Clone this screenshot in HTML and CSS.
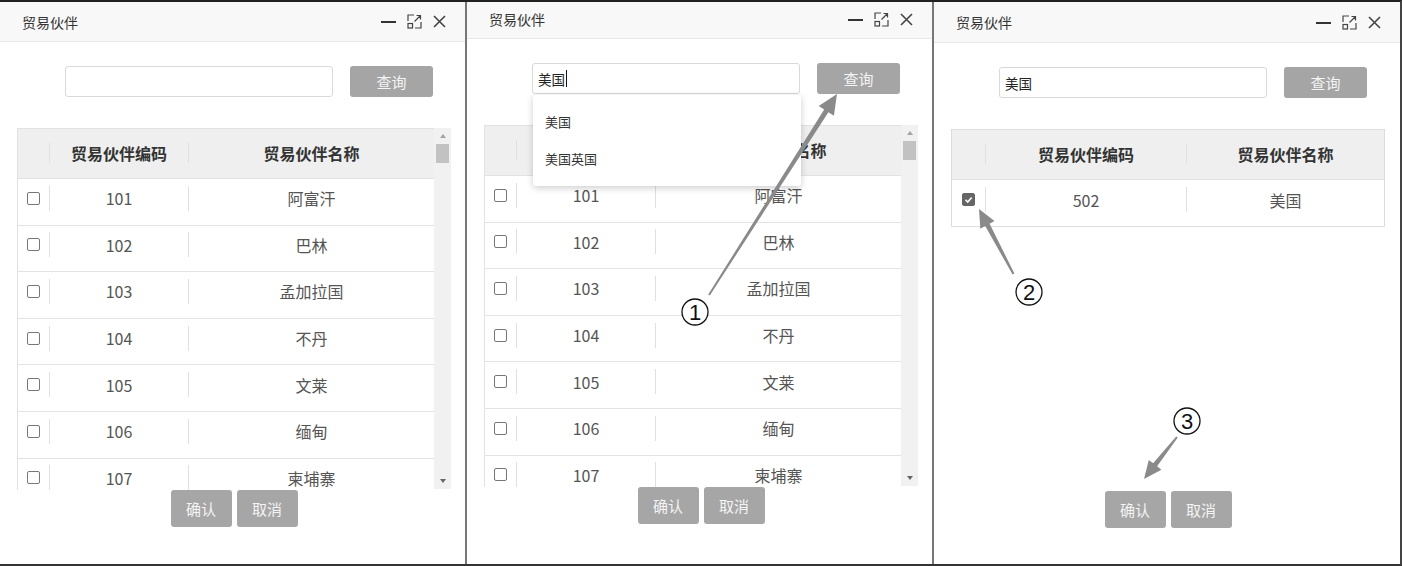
FILE: index.html
```html
<!DOCTYPE html>
<html lang="zh-CN">
<head>
  <meta charset="UTF-8">
  <title>贸易伙伴</title>
  <link rel="stylesheet" href="styles.css">
</head>
<body>
  <div class="shot">

    <!-- step 0: empty search -->
    <div class="panel p1">
      <div class="titlebar">
        <span class="title">贸易伙伴</span>
        <div class="tools">
          <svg width="15" height="15"><path d="M0 8h15" stroke="#333" stroke-width="2"/></svg>
          <svg width="15" height="15" fill="none" stroke="#444" stroke-width="1.2"><path d="M1 7V1h6M14 8v6H8M7.5 7.5L13.5 1.5M9.5 1.5h4v4"/><rect x="1" y="9.5" width="4.5" height="4.5"/></svg>
          <svg width="13" height="13"><path d="M1 1L12 12M12 1L1 12" stroke="#444" stroke-width="1.6"/></svg>
        </div>
      </div>
      <div class="search">
        <div class="input"></div>
        <div class="btn-query">查询</div>
      </div>
      <div class="tablewrap">
        <div class="grid">
          <div class="row head"><div class="c-chk"></div><div class="c-code">贸易伙伴编码</div><div class="c-name">贸易伙伴名称</div></div>
          <div class="row"><div class="c-chk"><span class="cb"></span></div><div class="c-code">101</div><div class="c-name">阿富汗</div></div>
          <div class="row"><div class="c-chk"><span class="cb"></span></div><div class="c-code">102</div><div class="c-name">巴林</div></div>
          <div class="row"><div class="c-chk"><span class="cb"></span></div><div class="c-code">103</div><div class="c-name">孟加拉国</div></div>
          <div class="row"><div class="c-chk"><span class="cb"></span></div><div class="c-code">104</div><div class="c-name">不丹</div></div>
          <div class="row"><div class="c-chk"><span class="cb"></span></div><div class="c-code">105</div><div class="c-name">文莱</div></div>
          <div class="row"><div class="c-chk"><span class="cb"></span></div><div class="c-code">106</div><div class="c-name">缅甸</div></div>
          <div class="row"><div class="c-chk"><span class="cb"></span></div><div class="c-code">107</div><div class="c-name">柬埔寨</div></div>
        </div>
        <div class="sbar"><div class="sb-up"></div><div class="sb-thumb"></div><div class="sb-track"></div><div class="sb-down"></div></div>
      </div>
      <div class="buttons">
        <div class="btn">确认</div>
        <div class="btn">取消</div>
      </div>
    </div>

    <!-- step 1: typing, suggestions open -->
    <div class="panel p2">
      <div class="titlebar">
        <span class="title">贸易伙伴</span>
        <div class="tools">
          <svg width="15" height="15"><path d="M0 8h15" stroke="#333" stroke-width="2"/></svg>
          <svg width="15" height="15" fill="none" stroke="#444" stroke-width="1.2"><path d="M1 7V1h6M14 8v6H8M7.5 7.5L13.5 1.5M9.5 1.5h4v4"/><rect x="1" y="9.5" width="4.5" height="4.5"/></svg>
          <svg width="13" height="13"><path d="M1 1L12 12M12 1L1 12" stroke="#444" stroke-width="1.6"/></svg>
        </div>
      </div>
      <div class="search">
        <div class="input">美国<span class="caret"></span>
          <div class="suggest">
            <div>美国</div>
            <div>美国英国</div>
          </div>
        </div>
        <div class="btn-query">查询</div>
      </div>
      <div class="tablewrap">
        <div class="grid">
          <div class="row head"><div class="c-chk"></div><div class="c-code">贸易伙伴编码</div><div class="c-name">贸易伙伴名称</div></div>
          <div class="row"><div class="c-chk"><span class="cb"></span></div><div class="c-code">101</div><div class="c-name">阿富汗</div></div>
          <div class="row"><div class="c-chk"><span class="cb"></span></div><div class="c-code">102</div><div class="c-name">巴林</div></div>
          <div class="row"><div class="c-chk"><span class="cb"></span></div><div class="c-code">103</div><div class="c-name">孟加拉国</div></div>
          <div class="row"><div class="c-chk"><span class="cb"></span></div><div class="c-code">104</div><div class="c-name">不丹</div></div>
          <div class="row"><div class="c-chk"><span class="cb"></span></div><div class="c-code">105</div><div class="c-name">文莱</div></div>
          <div class="row"><div class="c-chk"><span class="cb"></span></div><div class="c-code">106</div><div class="c-name">缅甸</div></div>
          <div class="row"><div class="c-chk"><span class="cb"></span></div><div class="c-code">107</div><div class="c-name">柬埔寨</div></div>
        </div>
        <div class="sbar"><div class="sb-up"></div><div class="sb-thumb"></div><div class="sb-track"></div><div class="sb-down"></div></div>
      </div>
      <div class="buttons">
        <div class="btn">确认</div>
        <div class="btn">取消</div>
      </div>
    </div>

    <!-- step 2: result selected -->
    <div class="panel p3">
      <div class="titlebar">
        <span class="title">贸易伙伴</span>
        <div class="tools">
          <svg width="15" height="15"><path d="M0 8h15" stroke="#333" stroke-width="2"/></svg>
          <svg width="15" height="15" fill="none" stroke="#444" stroke-width="1.2"><path d="M1 7V1h6M14 8v6H8M7.5 7.5L13.5 1.5M9.5 1.5h4v4"/><rect x="1" y="9.5" width="4.5" height="4.5"/></svg>
          <svg width="13" height="13"><path d="M1 1L12 12M12 1L1 12" stroke="#444" stroke-width="1.6"/></svg>
        </div>
      </div>
      <div class="search">
        <div class="input">美国</div>
        <div class="btn-query">查询</div>
      </div>
      <div class="tablewrap">
        <div class="grid full">
          <div class="row head"><div class="c-chk"></div><div class="c-code">贸易伙伴编码</div><div class="c-name">贸易伙伴名称</div></div>
          <div class="row"><div class="c-chk"><span class="cb on"><svg width="11" height="11"><path d="M2.5 5.8l2.2 2.2 4-4.6" fill="none" stroke="#fff" stroke-width="1.6"/></svg></span></div><div class="c-code">502</div><div class="c-name">美国</div></div>
        </div>
      </div>
      <div class="buttons">
        <div class="btn">确认</div>
        <div class="btn">取消</div>
      </div>
    </div>

    <!-- callouts drawn over the screenshots -->
    <svg class="marks" width="1402" height="566">
      <g fill="#8a8a8a">
        <polygon points="837,94 833.9,115.7 828.4,112.2 709.8,295.5 708.2,294.5 824.2,109.6 818.7,106.1"/>
        <polygon points="979,209 994.5,221.1 989.6,223.7 1014.4,273.5 1012.6,274.5 985.2,226.1 980.3,228.7"/>
        <polygon points="1144,479 1161.4,469.7 1157.1,466.3 1177.8,437.6 1176.2,436.4 1153.1,463.3 1148.8,459.9"/>
      </g>
      <g fill="#fff" stroke="#111" stroke-width="1.3">
        <circle cx="695" cy="312" r="13"/>
        <circle cx="1029" cy="292" r="13"/>
        <circle cx="1187" cy="421" r="13"/>
      </g>
      <g class="num" text-anchor="middle">
        <text x="695" y="320">1</text>
        <text x="1029" y="300">2</text>
        <text x="1187" y="429">3</text>
      </g>
    </svg>
  </div>
</body>
</html>
```

FILE: styles.css
```css
body {
  margin: 0;
  background: #fff;
  font-family: "Noto Sans CJK SC", "Noto Sans", sans-serif;
}

.shot {
  position: relative;
  display: flex;
  width: 1402px;
  height: 566px;
  box-sizing: border-box;
  border-top: 2px solid #222;
  border-bottom: 2px solid #333;
  border-right: 2px solid #444;
  overflow: hidden;
}

.panel {
  position: relative;
  flex: none;
  width: 465px;
  display: flex;
  flex-direction: column;
  background: #fff;
}

.panel + .panel {
  border-left: 2px solid #777;
}

.p3 {
  width: 466px;
}

/* title bar */
.titlebar {
  height: 40px;
  box-sizing: border-box;
  display: flex;
  align-items: center;
  justify-content: space-between;
  padding: 0 19px 0 22px;
  background: #f8f8f8;
  border-bottom: 1px solid #e8e8e8;
}

.p2 .titlebar {
  height: 37px;
  padding-bottom: 2px;
}

.p3 .titlebar {
  height: 41px;
}

.title {
  font-size: 14px;
  color: #333;
  line-height: 1;
}

.tools {
  display: flex;
  align-items: center;
  gap: 11px;
}

.tools svg {
  display: block;
}

/* search */
.search {
  display: flex;
  gap: 17px;
  margin-top: 24px;
  padding-left: 65px;
}

.input {
  position: relative;
  width: 268px;
  height: 31px;
  box-sizing: border-box;
  display: flex;
  align-items: center;
  padding-left: 5px;
  border: 1px solid #d9d9d9;
  border-radius: 3px;
  font-size: 13.5px;
  color: #222;
}

.caret {
  display: inline-block;
  width: 1px;
  height: 17px;
  margin-left: 1px;
  background: #111;
}

.suggest {
  position: absolute;
  top: 31px;
  left: 0;
  z-index: 2;
  width: 268px;
  box-sizing: border-box;
  padding: 8px 0 9px;
  background: #fff;
  border-radius: 3px;
  box-shadow: 0 2px 7px rgba(0, 0, 0, 0.2);
}

.suggest div {
  height: 37px;
  line-height: 37px;
  padding-left: 12px;
  font-size: 13px;
  color: #333;
}

.btn-query {
  width: 83px;
  height: 31px;
  display: flex;
  align-items: center;
  justify-content: center;
  background: #a5a5a5;
  border-radius: 3px;
  color: #f4f4f4;
  font-size: 15px;
}

/* table */
.tablewrap {
  display: flex;
  align-items: flex-start;
  width: 434px;
  height: 361px;
  margin: 31px 0 0 17px;
}

.grid {
  flex: 1;
  height: 100%;
  overflow: hidden;
  border-top: 1px solid #e2e2e2;
  border-left: 1px solid #e2e2e2;
}

.row {
  display: flex;
  align-items: center;
  height: 46.6px;
  box-sizing: border-box;
  padding-bottom: 7px;
  border-bottom: 1px solid #e3e3e3;
  font-size: 16px;
  color: #555;
}

.row.head {
  height: 50px;
  padding-bottom: 2px;
  background: #efefef;
  color: #333;
  font-weight: bold;
}

.c-chk {
  width: 31px;
  display: flex;
  justify-content: center;
}

.c-code,
.c-name {
  height: 25px;
  display: flex;
  align-items: center;
  justify-content: center;
  border-left: 1px solid #e0e0e0;
}

.head .c-code,
.head .c-name {
  height: 20px;
}

.c-code {
  width: 138px;
}

.c-name {
  flex: 1;
}

.grid.full {
  height: auto;
  border: 1px solid #dddddd;
}

.full .row:last-child {
  border-bottom: none;
  height: 46px;
}

.full .c-chk {
  width: 33px;
}

.full .c-code {
  width: 200px;
}

.cb {
  width: 13px;
  height: 13px;
  box-sizing: border-box;
  display: flex;
  align-items: center;
  justify-content: center;
  border: 1px solid #777;
  border-radius: 2px;
  background: #fff;
}

.cb.on {
  background: #666;
  border-color: #666;
}

/* fake scrollbar */
.sbar {
  width: 17px;
  height: 100%;
  display: flex;
  flex-direction: column;
  align-items: center;
  background: #f1f1f1;
}

.sb-up,
.sb-down {
  height: 16px;
  width: 17px;
  display: flex;
  align-items: center;
  justify-content: center;
}

.sb-up::after {
  content: "";
  border-left: 3.5px solid transparent;
  border-right: 3.5px solid transparent;
  border-bottom: 4px solid #a3a3a3;
}

.sb-down::after {
  content: "";
  border-left: 3.5px solid transparent;
  border-right: 3.5px solid transparent;
  border-top: 4px solid #666;
}

.sb-thumb {
  width: 13px;
  height: 19px;
  background: #c2c2c2;
}

.sb-track {
  flex: 1;
}

/* bottom buttons */
.buttons {
  display: flex;
  justify-content: center;
  gap: 5px;
  width: 434px;
  margin: 1px 0 0 17px;
}

.btn {
  width: 61px;
  height: 37px;
  display: flex;
  align-items: center;
  justify-content: center;
  background: #a6a6a6;
  border-radius: 3px;
  color: #f4f4f4;
  font-size: 15px;
}

/* annotations */
.marks {
  position: absolute;
  top: -2px;
  left: 0;
  z-index: 5;
  pointer-events: none;
}

.num {
  font-family: "Liberation Sans", sans-serif;
  font-size: 22px;
  fill: #111;
}
```
